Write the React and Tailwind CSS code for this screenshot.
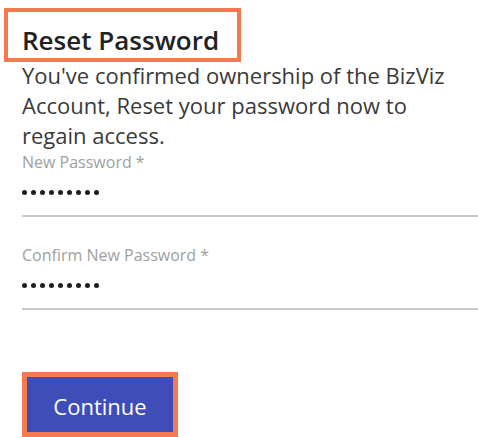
function Dots() {
  return (
    <div className="flex gap-[4px] h-[5px]">
      {Array.from({ length: 9 }).map((_, i) => (
        <span key={i} className="w-[5px] h-[5px] rounded-full bg-[#1e1e24]" />
      ))}
    </div>
  );
}

export default function App() {
  return (
    <div className="w-[478px] h-[437px] overflow-hidden bg-white" style={{ fontFamily: '"Open Sans", "Noto Sans", sans-serif' }}>
      <div className="ml-[4px] mt-[8px] w-[237px] h-[54px] border-[4px] border-[#f47a52] pl-[14px] flex items-end">
        <h1 className="text-[26px] leading-[30px] font-semibold text-[#222] pb-[3px]">Reset Password</h1>
      </div>
      <div className="pl-[22px]">
        <p className="text-[22px] leading-[30px] text-[#3a3a3a] -mt-[2px] w-[450px]">
          You've confirmed ownership of the BizViz Account, Reset your password now to regain access.
        </p>
        <div className="mt-[2px]">
          <label className="block text-[16px] leading-[20px] text-[#a0a0a0]">New Password *</label>
          <div className="mt-[18px]"><Dots /></div>
          <div className="mt-[20px] h-[2px] bg-[#c8c8c8]" />
        </div>
        <div className="mt-[28px]">
          <label className="block text-[16px] leading-[20px] text-[#a0a0a0]">Confirm New Password *</label>
          <div className="mt-[18px]"><Dots /></div>
          <div className="mt-[20px] h-[2px] bg-[#c8c8c8]" />
        </div>
        <div className="mt-[62px] w-[156px] h-[65px] border-[5px] border-[#f47a52]">
          <button className="w-full h-full bg-[#3f4db8] text-white text-[22px] leading-[28px] pt-[3px]">Continue</button>
        </div>
      </div>
    </div>
  );
}
